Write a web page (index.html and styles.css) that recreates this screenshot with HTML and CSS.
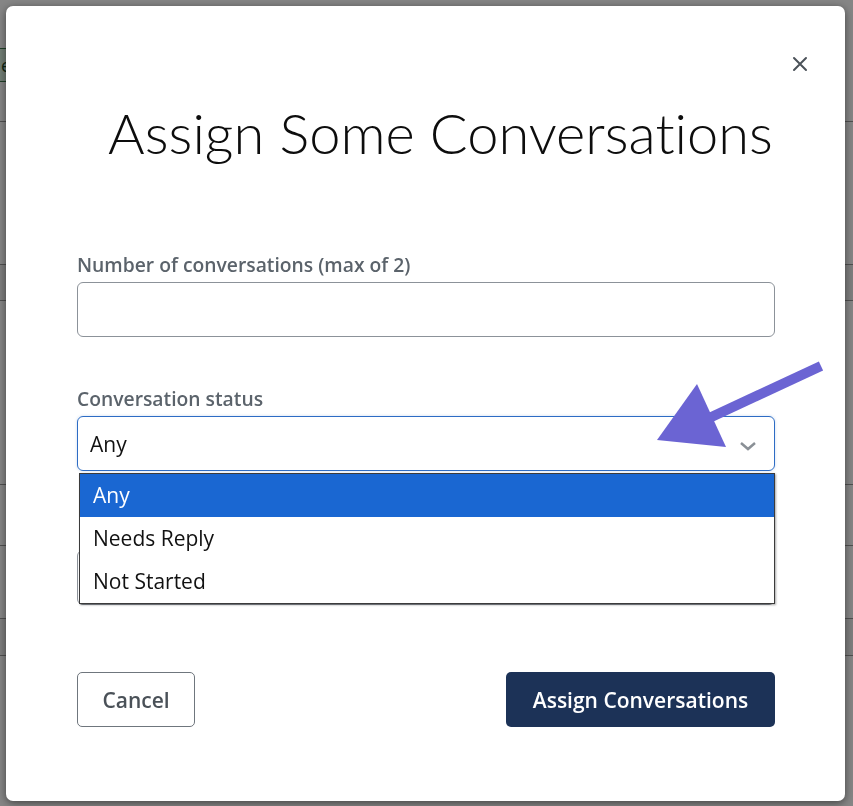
FILE: index.html
```html
<!DOCTYPE html>
<html lang="en">
<head>
	<meta charset="UTF-8">
	<meta name="viewport" content="width=device-width, initial-scale=1.0">
	<title>Assign Some Conversations</title>
	<link rel="stylesheet" href="styles.css">
</head>
<body>
	<div class="page">
		<div class="row row-head"><span class="badge">e</span></div>
		<div class="row row-a"></div>
		<div class="row row-b"></div>
		<div class="row row-c"></div>
		<div class="row row-d"></div>
		<div class="row row-e"></div>
		<div class="row row-f"></div>
	</div>

	<div class="overlay">
		<div class="modal">
			<button class="close" type="button" aria-label="Close">
				<svg width="16" height="16" viewBox="0 0 16 16"><path d="M2 2L14 14M14 2L2 14" stroke="#4b5259" stroke-width="2" stroke-linecap="round"/></svg>
			</button>

			<h1 class="title">Assign Some Conversations</h1>

			<div class="field">
				<label class="label">Number of conversations (max of 2)</label>
				<div class="input"></div>
			</div>

			<div class="field">
				<label class="label">Conversation status</label>
				<div class="select focus">
					<span>Any</span>
					<svg class="chev" width="18" height="12" viewBox="0 0 18 12"><path d="M2 3L9 9L16 3" fill="none" stroke="#8a9096" stroke-width="2.5"/></svg>
					<ul class="options">
						<li class="on">Any</li>
						<li>Needs Reply</li>
						<li>Not Started</li>
					</ul>
				</div>
			</div>

			<!-- covered by the open list -->
			<div class="field">
				<div class="label"></div>
				<div class="select"></div>
			</div>

			<div class="actions">
				<button class="btn cancel" type="button">Cancel</button>
				<button class="btn primary" type="button">Assign Conversations</button>
			</div>

			<!-- annotation arrow -->
			<svg class="pointer" width="853" height="806" viewBox="0 0 853 806">
				<line x1="821" y1="366" x2="705" y2="420" stroke="#6b64d3" stroke-width="10"/>
				<polygon points="697,384 657,440 726,447" fill="#6b64d3"/>
			</svg>
		</div>
	</div>
</body>
</html>
```

FILE: styles.css
```css
* {
	box-sizing: border-box;
}

body {
	margin: 0;
	font-family: "Open Sans", "Liberation Sans", sans-serif;
	color: #222;
	background: #fff;
}

/* page underneath the modal */
.page {
	height: 806px;
	overflow: hidden;
}

.page .row {
	border-bottom: 1px solid #999;
}

.row-head { height: 122px; }
.row-a { height: 143px; }
.row-b { height: 36px; background: #f1f1f1; }
.row-c { height: 184px; }
.row-d { height: 61px; }
.row-e { height: 73px; }
.row-f { height: 37px; background: #f1f1f1; }

.badge {
	display: inline-block;
	margin-top: 48px;
	margin-left: -10px;
	padding: 4px 4px 4px 10px;
	background: #d9f0df;
	border: 1px solid #3c7a4c;
	color: #1a4a27;
	font-size: 18px;
}

.overlay {
	position: fixed;
	inset: 0;
	background: rgba(0, 0, 0, .48);
	padding: 6px 8px 5px 6px;
}

.modal {
	position: relative;
	height: 795px;
	width: 839px;
	background: #fff;
	border-radius: 7px;
	box-shadow: 0 2px 8px rgba(0, 0, 0, .5);
	padding: 0 70px 0 71px;
}

.close {
	position: absolute;
	top: 50px;
	right: 37px;
	width: 16px;
	height: 16px;
	padding: 0;
	border: 0;
	background: none;
	display: flex;
}

.title {
	margin: 0;
	padding: 92px 0 0 29px;
	text-align: center;
	white-space: nowrap;
	font-family: Lato, "Open Sans", sans-serif;
	font-variant-ligatures: none;
	font-weight: 300;
	font-size: 56px;
	line-height: 70px;
	color: #0d0d0d;
}

.field {
	margin-top: 50px;
}

.title + .field {
	margin-top: 85px;
}

.label {
	display: block;
	font-weight: 600;
	font-size: 19.3px;
	line-height: 24px;
	height: 24px;
	color: #5b636b;
	margin-bottom: 5px;
}

.input, .select {
	height: 55px;
	border: 1px solid #8c9299;
	border-radius: 6px;
}

.select {
	position: relative;
	display: flex;
	align-items: center;
	padding-left: 12px;
	font-size: 21px;
	color: #111;
}

.select.focus {
	border-color: #2d6cc4;
	box-shadow: 0 0 3px rgba(45, 108, 196, .25);
}

.chev {
	position: absolute;
	right: 17px;
	top: 23px;
}

.options {
	position: absolute;
	top: 56px;
	left: 1px;
	right: -1px;
	margin: 0;
	padding: 0;
	list-style: none;
	background: #fff;
	border: 1px solid #3b3b3b;
	box-shadow: 1px 1px 2px rgba(0, 0, 0, .35);
	z-index: 2;
}

.options li {
	height: 43px;
	line-height: 43px;
	padding-left: 13px;
	font-size: 21px;
	color: #111;
}

.options li.on {
	background: #1a67d2;
	color: #fff;
}

.actions {
	display: flex;
	justify-content: space-between;
	margin-top: 67px;
}

.btn {
	height: 55px;
	border-radius: 5px;
	font-family: inherit;
	font-weight: 600;
	font-size: 21px;
	padding: 0;
}

.cancel {
	width: 118px;
	background: #fff;
	border: 1px solid #6f767d;
	color: #4a5158;
}

.primary {
	width: 269px;
	background: #1c3257;
	border: 0;
	color: #fff;
}

.pointer {
	position: absolute;
	left: -6px;
	top: -6px;
	pointer-events: none;
	z-index: 3;
}
```
